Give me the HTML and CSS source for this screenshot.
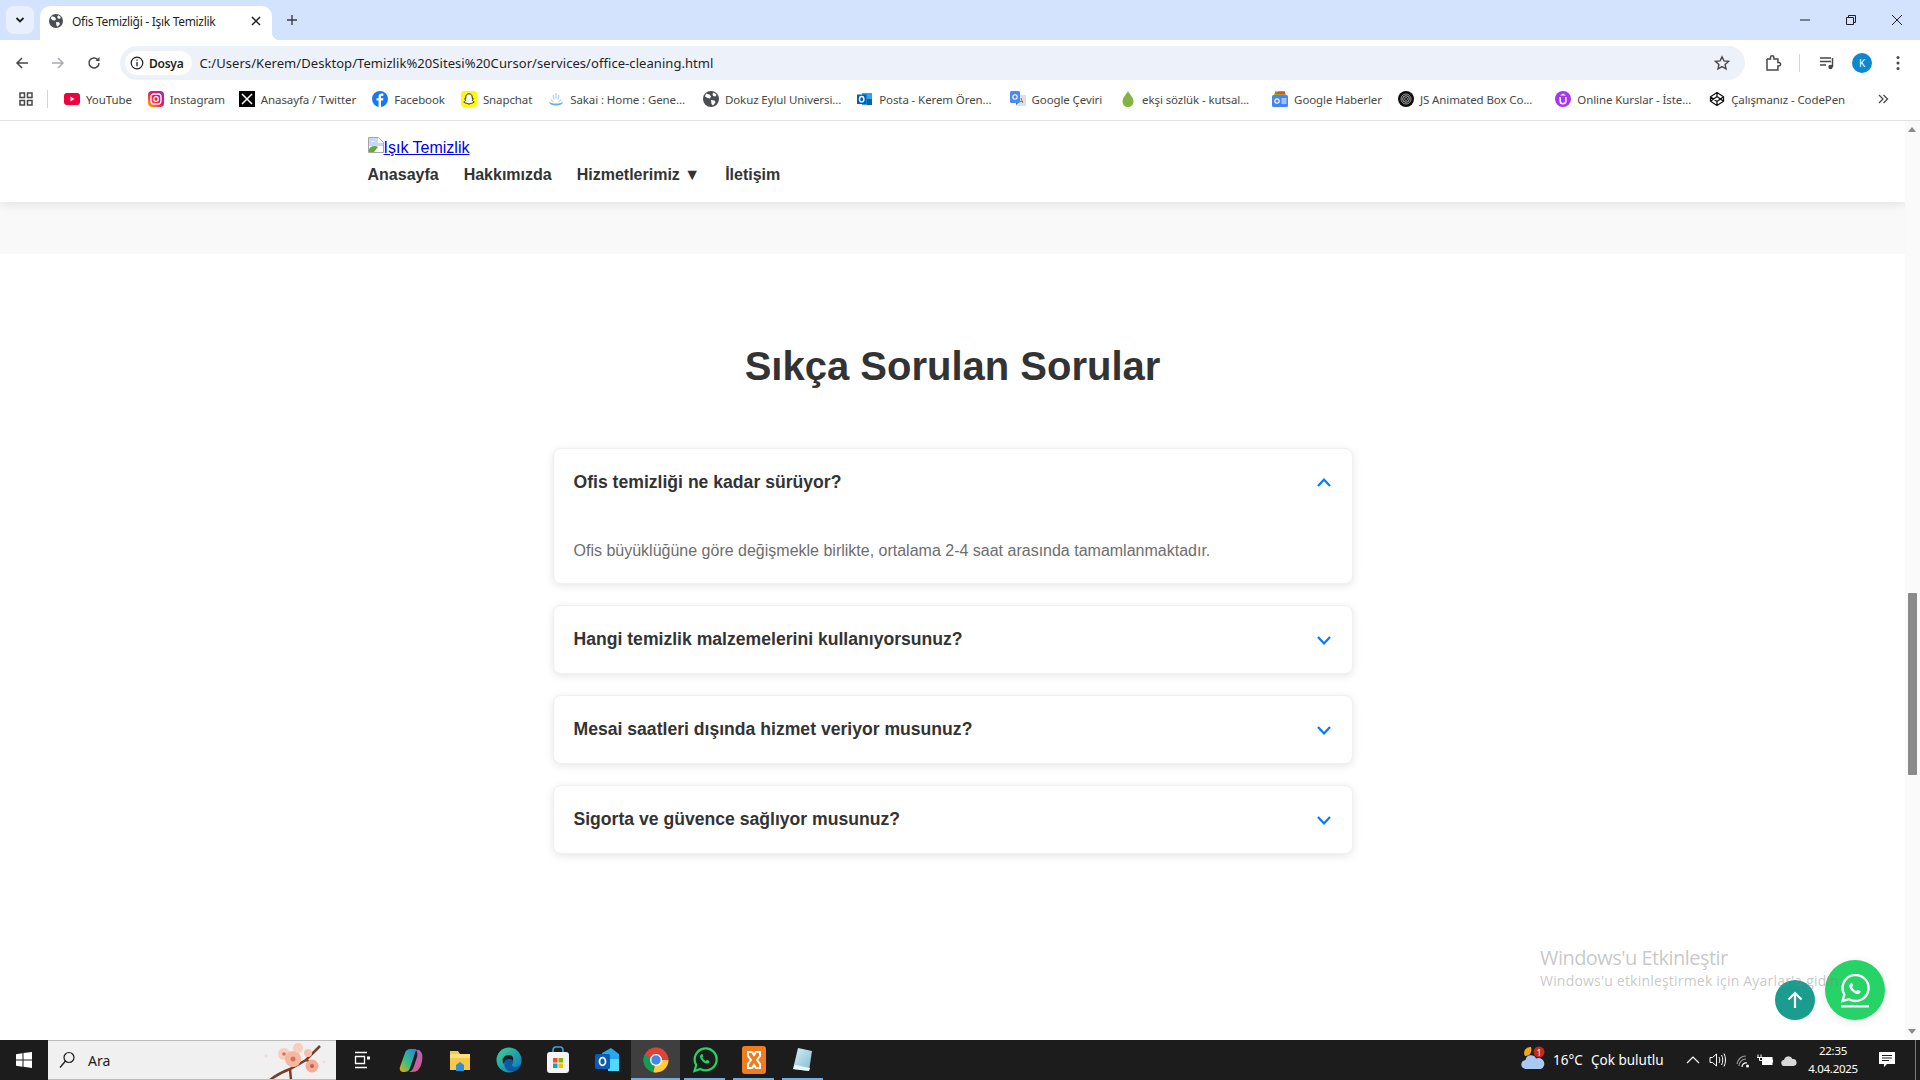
FILE: index.html
```html
<!DOCTYPE html>
<html lang="tr">

<head>
    <meta charset="UTF-8">
    <meta name="viewport" content="width=device-width, initial-scale=1.0">
    <title>Ofis Temizliği - Işık Temizlik</title>
    <link rel="stylesheet" href="styles.css">
</head>

<body>
    <svg class="defs" width="0" height="0">
        <symbol id="globe" viewBox="0 0 16 16">
            <circle cx="8" cy="8" r="8" fill="#4a4d51"/>
            <path d="M3 2.500l3.500 1 1.500 2-1 2-2.500-.5L2 5.500zM8 9l3.500.5 1 2-2.500 3-1.500-1.500zM10.500 1.500l3 2-1 2-2.500-.5-.5-2z" fill="#fff"/>
        </symbol>
        <symbol id="chev-down" viewBox="0 0 16 16">
            <path d="M2 5l6 6.500L14 5" fill="none" stroke="#007bff" stroke-width="2.200"/>
        </symbol>
        <symbol id="chev-up" viewBox="0 0 16 16">
            <path d="M2 11l6-6.500L14 11" fill="none" stroke="#007bff" stroke-width="2.200"/>
        </symbol>
    </svg>

    <!-- tarayici ust kismi -->
    <div class="tabstrip">
        <button class="tab-search">
            <svg width="10" height="10" viewBox="0 0 10 10"><path d="M1.500 3L5 6.500 8.500 3" fill="none" stroke="#1f1f1f" stroke-width="1.800"/></svg>
        </button>
        <div class="tab">
            <svg class="tab-icon" width="14" height="14"><use href="#globe"/></svg>
            <span class="tab-title">Ofis Temizliği - Işık Temizlik</span>
            <svg class="tab-close" width="10" height="10" viewBox="0 0 10 10"><path d="M1 1l8 8M9 1L1 9" stroke="#1f1f1f" stroke-width="1.500"/></svg>
        </div>
        <svg class="tab-new" width="12" height="12" viewBox="0 0 12 12"><path d="M6 1v10M1 6h10" stroke="#3c3c3c" stroke-width="1.400"/></svg>
        <div class="window-controls">
            <svg width="12" height="12" viewBox="0 0 12 12"><path d="M1 6h10" stroke="#1f1f1f"/></svg>
            <svg width="12" height="12" viewBox="0 0 12 12"><path d="M1.500 3.500h7v7h-7zM3.500 3.500v-2h7v7h-2" fill="none" stroke="#1f1f1f"/></svg>
            <svg width="12" height="12" viewBox="0 0 12 12"><path d="M1 1l10 10M11 1L1 11" stroke="#1f1f1f"/></svg>
        </div>
    </div>

    <div class="toolbar">
        <div class="nav-buttons">
            <svg width="14" height="14" viewBox="0 0 14 14"><path d="M13 7H2M7 2L2 7l5 5" fill="none" stroke="#474747" stroke-width="1.500"/></svg>
            <svg width="14" height="14" viewBox="0 0 14 14"><path d="M1 7h11M7 2l5 5-5 5" fill="none" stroke="#a9acb0" stroke-width="1.500"/></svg>
            <svg width="14" height="14" viewBox="0 0 14 14"><path d="M12 7a5 5 0 1 1-1.500-3.600" fill="none" stroke="#474747" stroke-width="1.500"/><path d="M12.500 1v4h-4z" fill="#474747"/></svg>
        </div>
        <div class="address-bar">
            <div class="chip">
                <svg width="14" height="14" viewBox="0 0 14 14"><circle cx="7" cy="7" r="5.800" fill="none" stroke="#1f1f1f" stroke-width="1.200"/><path d="M7 6v4.200M7 3.500v1.300" stroke="#1f1f1f" stroke-width="1.300"/></svg>
                <span>Dosya</span>
            </div>
            <span class="url">C:/Users/Kerem/Desktop/Temizlik%20Sitesi%20Cursor/services/office-cleaning.html</span>
            <svg class="star" width="16" height="16" viewBox="0 0 16 16"><path d="M8 1.800l1.900 4.100 4.500.5-3.300 3 .9 4.400L8 11.600l-4 2.200.9-4.400-3.300-3 4.500-.5z" fill="none" stroke="#474747" stroke-width="1.400"/></svg>
        </div>
        <div class="toolbar-right">
            <svg class="tool-ext" width="18" height="18" viewBox="0 0 18 18"><path d="M3 5h3.500V3.500a1.700 1.700 0 0 1 3.400 0V5h4v3.500h1a1.700 1.700 0 0 1 0 3.400h-1V16H3v-3" fill="none" stroke="#474747" stroke-width="1.500"/><path d="M3 5v8" stroke="#474747" stroke-width="1.500"/></svg>
            <span class="tool-divider"></span>
            <svg class="tool-media" width="16" height="16" viewBox="0 0 16 16"><path d="M1 3h11M1 6.500h11M1 10h6" stroke="#474747" stroke-width="1.300"/><path d="M13.500 3v9" stroke="#474747" stroke-width="1.500"/><circle cx="11.500" cy="12" r="2.200" fill="#474747"/></svg>
            <span class="avatar">K</span>
            <svg class="tool-dots" width="4" height="16" viewBox="0 0 4 16"><circle cx="2" cy="2.500" r="1.500" fill="#474747"/><circle cx="2" cy="8" r="1.500" fill="#474747"/><circle cx="2" cy="13.500" r="1.500" fill="#474747"/></svg>
        </div>
    </div>

    <div class="bookmarks">
        <svg class="apps" width="14" height="14" viewBox="0 0 14 14"><path d="M1 1h4.500v4.500H1zM8.500 1H13v4.500H8.500zM1 8.500h4.500V13H1zM8.500 8.500H13V13H8.500z" fill="none" stroke="#474747" stroke-width="1.500"/></svg>
        <span class="bm-divider"></span>
        <a class="bm">
            <svg width="16" height="16" viewBox="0 0 16 16"><rect y="2" width="16" height="12" rx="3" fill="#f0003c"/><path d="M6.500 5.500v5l4-2.500z" fill="#fff"/></svg>YouTube</a>
        <a class="bm bm-tight">
            <svg width="16" height="16" viewBox="0 0 16 16"><defs><linearGradient id="ig" x1="0" y1="1" x2="1" y2="0"><stop offset="0" stop-color="#fdb60d"/><stop offset=".5" stop-color="#f0145a"/><stop offset="1" stop-color="#a425d6"/></linearGradient></defs><rect width="16" height="16" rx="4" fill="url(#ig)"/><rect x="3" y="3" width="10" height="10" rx="3" fill="none" stroke="#fff" stroke-width="1.300"/><circle cx="8" cy="8" r="2.300" fill="none" stroke="#fff" stroke-width="1.300"/></svg>Instagram</a>
        <a class="bm">
            <svg width="16" height="16" viewBox="0 0 16 16"><rect width="16" height="16" fill="#000"/><path d="M3 3l10 10M13 3L3 13" stroke="#fff" stroke-width="1.500"/></svg>Anasayfa / Twitter</a>
        <a class="bm">
            <svg width="16" height="16" viewBox="0 0 16 16"><circle cx="8" cy="8" r="8" fill="#1877f2"/><path d="M9 16V9.500h2l.4-2.300H9V6c0-.8.300-1.200 1.200-1.200h1.200V2.700C11 2.600 10.400 2.500 9.800 2.500 7.800 2.500 6.600 3.700 6.600 5.700v1.500H4.500v2.300h2.100V16z" fill="#fff"/></svg>Facebook</a>
        <a class="bm">
            <svg width="16" height="16" viewBox="0 0 16 16"><rect width="16" height="16" rx="3" fill="#fffc00"/><path d="M8 2.800c2 0 3.200 1.400 3.200 3.200v1.500l1.300.3c-.2.800-1.100.9-1.300 1.300.3 1.200 1.200 1.700 2 1.900-.3.700-1.300.6-1.800 1-.5.500-1.500.1-3.400 1.200-1.900-1.100-2.900-.7-3.400-1.200-.5-.4-1.500-.3-1.800-1 .8-.2 1.700-.7 2-1.900-.2-.4-1.100-.5-1.300-1.300l1.300-.3V6c0-1.800 1.200-3.200 3.200-3.200z" fill="#fff" stroke="#111" stroke-width=".9"/></svg>Snapchat</a>
        <a class="bm bm-wide">
            <svg width="16" height="16" viewBox="0 0 16 16"><path d="M1 10.500c0 2.500 3 4 7 4s7-1.500 7-4c-1 1.500-3.500 2-7 2s-6-.5-7-2z" fill="#6aaee4"/><path d="M8 2v6M5.500 4c-.5 1.500-.5 3 .5 4.500M10.500 4c.5 1.500.5 3-.5 4.500M3 8.500c.5 1 1.500 1.800 2.500 2M13 8.500c-.5 1-1.500 1.800-2.500 2" fill="none" stroke="#a9cdeb" stroke-width="1.100"/></svg>Sakai : Home : Gene...</a>
        <a class="bm">
            <svg width="16" height="16"><use href="#globe"/></svg>Dokuz Eylul Universi...</a>
        <a class="bm bm-wide">
            <svg width="16" height="16" viewBox="0 0 16 16"><path d="M5 2h10v12H5z" fill="#28a8ea"/><path d="M10 8h5v6h-5z" fill="#0f5ea8"/><rect y="3.500" width="9.500" height="9.500" fill="#0a5bb5"/><ellipse cx="4.700" cy="8.200" rx="2.200" ry="2.700" fill="none" stroke="#fff" stroke-width="1.400"/></svg>Posta - Kerem Ören...</a>
        <a class="bm bm-wide">
            <svg width="16" height="16" viewBox="0 0 16 16"><rect x="6" y="4" width="10" height="11" fill="#dcdfe3"/><path d="M11 7l1.800 5M9.500 10.500h3.500" stroke="#7a7f85" stroke-width="1"/><rect width="10" height="12" rx="1.500" fill="#4a8af0"/><circle cx="5" cy="6" r="2.200" fill="none" stroke="#fff" stroke-width="1.100"/><path d="M6 14l2-2H6z" fill="#2f62b8"/></svg>Google Çeviri</a>
        <a class="bm bm-wider">
            <svg width="16" height="16" viewBox="0 0 16 16"><path d="M8 0c1 2.500 5.500 6.500 5.500 10.500a5.500 5.500 0 0 1-11 0C2.500 6.500 7 2.500 8 0z" fill="#81b441"/></svg>ekşi sözlük - kutsal...</a>
        <a class="bm">
            <svg width="16" height="16" viewBox="0 0 16 16"><path d="M2 2.500h12v3H2z" fill="#f9ab00"/><path d="M3 0.500h10v3H3z" fill="#34a853"/><path d="M6 .5h7v2H6z" fill="#ea4335"/><rect y="4" width="16" height="12" rx="1.500" fill="#4285f4"/><circle cx="5" cy="10" r="2.200" fill="none" stroke="#fff" stroke-width="1.200"/><path d="M9.500 8h5M9.500 10h5M9.500 12h5" stroke="#fff"/></svg>Google Haberler</a>
        <a class="bm bm-wider">
            <svg width="16" height="16" viewBox="0 0 16 16"><circle cx="8" cy="8" r="8" fill="#0c0c0c"/><circle cx="8" cy="8" r="5" fill="none" stroke="#bbb" stroke-width=".8"/><circle cx="8" cy="8" r="3.300" fill="none" stroke="#ddd" stroke-width=".8"/><circle cx="8" cy="8" r="1.500" fill="none" stroke="#999" stroke-width=".8"/></svg>JS Animated Box Co...</a>
        <a class="bm bm-wide">
            <svg width="16" height="16" viewBox="0 0 16 16"><circle cx="8" cy="8" r="8" fill="#a435f0"/><path d="M5.200 6v4a2.800 2.800 0 0 0 5.600 0V6" fill="none" stroke="#fff" stroke-width="1.600"/><path d="M8 2.500L5 4.500h6z" fill="#fff"/></svg>Online Kurslar - İste...</a>
        <a class="bm">
            <svg width="16" height="16" viewBox="0 0 16 16"><path d="M8 1.500l6.500 4.300v4.400L8 14.500l-6.500-4.300V5.800zM8 1.500v4M8 10.500v4M1.500 5.800L8 10.500l6.500-4.700M1.500 10.200L8 5.500l6.500 4.700" fill="none" stroke="#111" stroke-width="1.300"/></svg>Çalışmanız - CodePen</a>
        <svg class="bm-more" width="12" height="12" viewBox="0 0 12 12"><path d="M2 2l4 4-4 4M6.500 2l4 4-4 4" fill="none" stroke="#474747" stroke-width="1.300"/></svg>
    </div>

    <div class="viewport">
        <div class="page">
            <header class="site-header">
                <div class="container">
                    <a class="logo" href="#"><svg class="broken-img" width="16" height="16" viewBox="0 0 16 16"><path d="M.5.500h10l5 5v10H.5z" fill="#fff" stroke="#a5a5a5"/><path d="M1 1h9v5h5v3L1 9z" fill="#c5d8f5"/><path d="M3 5a2 1.200 0 0 1 4 0z" fill="#fff"/><path d="M1 15v-3c2-3 6-4 9-2l-4 5z" fill="#5fa83c"/></svg>Işık Temizlik</a>
                    <nav class="main-nav">
                        <a href="#">Anasayfa</a>
                        <a href="#">Hakkımızda</a>
                        <a href="#">Hizmetlerimiz ▼</a>
                        <a href="#">İletişim</a>
                    </nav>
                </div>
            </header>
            <div class="gray-strip"></div>
            <section class="faq">
                <h2>Sıkça Sorulan Sorular</h2>
                <div class="faq-list">
                    <div class="faq-item">
                        <div class="faq-question">
                            <h3>Ofis temizliği ne kadar sürüyor?</h3>
                            <svg width="16" height="16"><use href="#chev-up"/></svg>
                        </div>
                        <p class="faq-answer">Ofis büyüklüğüne göre değişmekle birlikte, ortalama 2-4 saat arasında tamamlanmaktadır.</p>
                    </div>
                    <div class="faq-item">
                        <div class="faq-question">
                            <h3>Hangi temizlik malzemelerini kullanıyorsunuz?</h3>
                            <svg width="16" height="16"><use href="#chev-down"/></svg>
                        </div>
                    </div>
                    <div class="faq-item">
                        <div class="faq-question">
                            <h3>Mesai saatleri dışında hizmet veriyor musunuz?</h3>
                            <svg width="16" height="16"><use href="#chev-down"/></svg>
                        </div>
                    </div>
                    <div class="faq-item">
                        <div class="faq-question">
                            <h3>Sigorta ve güvence sağlıyor musunuz?</h3>
                            <svg width="16" height="16"><use href="#chev-down"/></svg>
                        </div>
                    </div>
                </div>
            </section>

            <a class="fab fab-top" href="#">
                <svg width="16" height="18" viewBox="0 0 16 18"><path d="M8 17V2M1.500 8.500L8 2l6.500 6.500" fill="none" stroke="#fff" stroke-width="2.200"/></svg>
            </a>
            <a class="fab fab-whatsapp" href="#">
                <svg class="wa-icon" width="32" height="34" viewBox="0 0 32 34"><path d="M3.500 27l1.800-6.500A13 13 0 1 1 10 25.200z" fill="none" stroke="#fff" stroke-width="2.400"/><path d="M11.500 9.500c-2 1.500-1.500 4.500 1.500 7.500s6 4 7.800 2.300c.8-.8.800-1.800.5-2.200l-2.800-1.400-1.300 1.400c-1.800-.7-3.500-2.300-4.200-4.200l1.300-1.200-1.200-2.900c-.5-.3-1-.2-1.600.7z" fill="#fff"/><rect x="2" y="31" width="28" height="2.500" fill="#fff"/></svg>
            </a>
            <div class="watermark">
                <div class="wm-title">Windows'u Etkinleştir</div>
                <div class="wm-sub">Windows'u etkinleştirmek için Ayarlar'a gidin.</div>
            </div>
        </div>
        <div class="scrollbar">
            <span class="arrow-up"></span>
            <span class="thumb"></span>
            <span class="arrow-down"></span>
        </div>
    </div>

    <!-- gorev cubugu -->
    <div class="taskbar">
        <div class="start">
            <svg width="16" height="16" viewBox="0 0 16 16"><path d="M0 2.300l6.500-1V7.500H0zM7.500 1.100L16 0v7.500H7.500zM0 8.500h6.500v6.200l-6.500-1zM7.500 8.500H16V16l-8.500-1.200z" fill="#fff"/></svg>
        </div>
        <div class="search">
            <svg width="16" height="18" viewBox="0 0 16 18"><circle cx="10" cy="6.500" r="5" fill="none" stroke="#1c1c1c" stroke-width="1.200"/><path d="M6.500 10L1 16.500" stroke="#1c1c1c" stroke-width="1.300"/></svg>
            <span>Ara</span>
            <svg class="blossom" width="66" height="38" viewBox="0 0 66 38"><path d="M8 38c5-4 12-8 20-11l16-9 14-14M28 27l1 11M44 18l10 5" fill="none" stroke="#7a3d25" stroke-width="2.500"/><circle cx="4" cy="14" r="1.500" fill="#f8dcd2"/><circle cx="62" cy="20" r="1.500" fill="#f8dcd2"/><circle cx="22" cy="12" r="6" fill="#f8cdbd"/><circle cx="31" cy="17" r="8" fill="#f4b7a0"/><circle cx="50" cy="24" r="6.500" fill="#f2ab96"/><circle cx="36" cy="6" r="5" fill="#f8cdbd"/><circle cx="46" cy="11" r="4" fill="#f6c0ae"/><circle cx="31" cy="17" r="2.500" fill="#d9705a"/><circle cx="50" cy="24" r="2" fill="#c85e4c"/><circle cx="22" cy="12" r="1.800" fill="#d9705a"/></svg>
        </div>
        <div class="task-icons">
            <span class="task-slot task-view">
                <svg width="16" height="18" viewBox="0 0 16 18"><path d="M1 1.500h12M1 16.500h12M1.500 5.500h9v7h-9z" fill="none" stroke="#fff" stroke-width="1.300"/><rect x="13" y="5.500" width="3" height="3" fill="#fff"/></svg>
            </span>
            <span class="task-slot">
                <svg width="24" height="26" viewBox="0 0 24 26"><defs><linearGradient id="cp1" x1="0" y1="1" x2="1" y2="0"><stop offset="0" stop-color="#f5a800"/><stop offset=".45" stop-color="#2fbf8f"/><stop offset="1" stop-color="#2d7fe0"/></linearGradient><linearGradient id="cp2" x1="0" y1="0" x2="1" y2="1"><stop offset="0" stop-color="#8a6be8"/><stop offset="1" stop-color="#e8587a"/></linearGradient></defs><path d="M11 2h5c2 0 1 2 0 4l-5 15c-1 3-3 4-6 4-3 0-5-2-4-5L6 6c1-3 3-4 5-4z" fill="url(#cp1)"/><path d="M17 3c3-1 5 1 6 4 1 4 0 12-4 16-1 1-3 2-6 2h-3c3-1 4-3 5-6l3-9c1-3 0-5-1-7z" fill="url(#cp2)"/></svg>
            </span>
            <span class="task-slot">
                <svg width="24" height="24" viewBox="0 0 24 24"><path d="M2 3h8l2 3h10v16H2z" fill="#f7c948"/><path d="M2 6h20v4H2z" fill="#fcdf7e"/><path d="M8 23v-6l4-3 4 3v6z" fill="#2e8fd6"/></svg>
            </span>
            <span class="task-slot">
                <svg width="26" height="26" viewBox="0 0 26 26"><defs><linearGradient id="ed" x1="0" y1="0" x2="1" y2="1"><stop offset="0" stop-color="#3fd58f"/><stop offset="1" stop-color="#0c6fc0"/></linearGradient></defs><circle cx="13" cy="13" r="12.500" fill="url(#ed)"/><path d="M13 24c-5-2-6-8-3-11 2-2 6-1 7 1 1 2-1 3-1 4 0 3 6 3 9-1-1 5-6 9-12 7z" fill="#0b5aa6"/><path d="M17 14c-1-2-5-3-7-1-1 1-2 2-2 4-3-3-1-9 5-9 3 0 5 2 4 6z" fill="#1c1c1c"/></svg>
            </span>
            <span class="task-slot">
                <svg width="24" height="28" viewBox="0 0 24 28"><path d="M7 7V4a3 3 0 0 1 3-3h4a3 3 0 0 1 3 3v3" fill="none" stroke="#28a8ea" stroke-width="1.600"/><rect x="1" y="6" width="22" height="21" rx="3" fill="#f4f4f4"/><rect x="7" y="12" width="4.500" height="4.500" fill="#f25022"/><rect x="12.500" y="12" width="4.500" height="4.500" fill="#7fba00"/><rect x="7" y="17.500" width="4.500" height="4.500" fill="#00a4ef"/><rect x="12.500" y="17.500" width="4.500" height="4.500" fill="#ffb900"/></svg>
            </span>
            <span class="task-slot">
                <svg width="26" height="26" viewBox="0 0 26 26"><path d="M8 6l9-5 8 6v15H8z" fill="#28a8ea"/><path d="M14 12h11v12H14z" fill="#50d9ff"/><rect x="1" y="7" width="15" height="15" rx="1.500" fill="#0a5bb5"/><ellipse cx="8.500" cy="14.500" rx="3" ry="3.800" fill="none" stroke="#fff" stroke-width="1.800"/></svg>
            </span>
            <span class="task-slot is-active">
                <svg width="26" height="26" viewBox="0 0 26 26"><circle cx="13" cy="13" r="12.500" fill="#db4437"/><path d="M13 13L1.500 8a12.500 12.500 0 0 0 9 17.200z" fill="#0f9d58"/><path d="M13 13h12.500a12.500 12.500 0 0 1-15 12.200z" fill="#ffcd40"/><circle cx="13" cy="13" r="6" fill="#fff"/><circle cx="13" cy="13" r="4.700" fill="#4285f4"/></svg>
            </span>
            <span class="task-slot is-open">
                <svg width="26" height="26" viewBox="0 0 26 26"><path d="M2.500 24l1.700-6A11 11 0 1 1 8.300 22z" fill="#1c1c1c" stroke="#25d366" stroke-width="2.200"/><path d="M9 7.500c-1.700 1.300-1.300 3.800 1.300 6.400s5 3.400 6.500 2c.7-.7.700-1.500.4-1.900l-2.300-1.200-1.100 1.200c-1.500-.6-3-2-3.500-3.500l1.100-1-1-2.400c-.5-.3-.9-.2-1.400.4z" fill="#25d366"/></svg>
            </span>
            <span class="task-slot is-open">
                <svg width="24" height="28" viewBox="0 0 24 28"><rect width="24" height="28" rx="3" fill="#f07c20"/><path d="M6 6h4l2 3 2-3h4v4l-3 4 3 4v4h-4l-2-3-2 3H6v-4l3-4-3-4z" fill="none" stroke="#fff" stroke-width="2"/></svg>
            </span>
            <span class="task-slot is-open">
                <svg width="24" height="26" viewBox="0 0 24 26"><defs><linearGradient id="nt" x1="0" y1="0" x2="1" y2="1"><stop offset="0" stop-color="#d7f2f8"/><stop offset="1" stop-color="#7db9cf"/></linearGradient></defs><path d="M7 1l14 3-3 20L2 22z" fill="url(#nt)"/><path d="M2 22l16 2 1-3L4 18z" fill="#e9f7fa"/></svg>
            </span>
        </div>
        <div class="tray">
            <svg class="weather" width="24" height="24" viewBox="0 0 24 24"><path d="M10 1a6 6 0 0 0-6 9c3 0 5-1 6-4 .5-2 .5-4 0-5z" fill="#f3a51f"/><path d="M5 23a4.500 4.500 0 0 1-.5-9 5.500 5.500 0 0 1 10.500-1.500A5.200 5.200 0 0 1 20 23z" fill="#a9c9f0"/><circle cx="18" cy="6" r="5.500" fill="#c42b1c"/></svg>
            <span class="badge">1</span>
            <span class="temp">16°C</span>
            <span class="cond">Çok bulutlu</span>
            <svg class="tray-chev" width="14" height="8" viewBox="0 0 14 8"><path d="M1 7l6-6 6 6" fill="none" stroke="#fff" stroke-width="1.200"/></svg>
            <svg class="tray-sound" width="17" height="16" viewBox="0 0 17 16"><path d="M1 5.500h2.500L7.500 2v12l-4-3.500H1z" fill="none" stroke="#fff"/><path d="M10 5c1 2 1 4 0 6M12.500 3c1.700 3 1.700 7 0 10M15 1.500c2 4 2 9 0 13" fill="none" stroke="#fff"/></svg>
            <svg class="tray-wifi" width="14" height="14" viewBox="0 0 14 14"><path d="M1 10a9 9 0 0 1 9-8M3 12a7 7 0 0 1 7-7" fill="none" stroke="#9a9a9a" stroke-width="1.200"/><path d="M6 13a4 4 0 0 1 5-4" fill="none" stroke="#fff" stroke-width="1.200"/><circle cx="11.500" cy="12" r="1.500" fill="#fff"/></svg>
            <svg class="tray-batt" width="16" height="12" viewBox="0 0 16 12"><path d="M1 .5v3M4 .5v3M0 3.500h5M2.500 3.500v3h3" fill="none" stroke="#fff"/><rect x="5.500" y="3.500" width="9.500" height="7" fill="#fff" stroke="#fff"/><rect x="15" y="5.500" width="1" height="3" fill="#fff"/></svg>
            <svg class="tray-cloud" width="16" height="10" viewBox="0 0 16 10"><path d="M3.500 10a3 3 0 0 1-.5-6 4.500 4.500 0 0 1 8.500-1A3.500 3.500 0 0 1 12.500 10z" fill="#d8d8d8"/></svg>
            <div class="clock"><span>22:35</span><span>4.04.2025</span></div>
            <svg class="tray-notif" width="16" height="16" viewBox="0 0 16 16"><path d="M0 0h16v12H8l-3 3v-3H0z" fill="#fff"/><path d="M3 3.500h10M3 6h10M3 8.500h7" stroke="#1c1c1c"/></svg>
            <span class="show-desktop"></span>
        </div>
    </div>
</body>

</html>
```

FILE: styles.css
```css
* {
    box-sizing: border-box;
}

html, body {
    margin: 0;
    height: 100%;
    overflow: hidden;
}

body {
    display: flex;
    flex-direction: column;
    height: 1080px;
    font-family: "Liberation Sans", Arial, sans-serif;
    background-color: #fff;
    color: #333;
}

.defs {
    position: absolute;
}

/* tab strip */
.tabstrip {
    display: flex;
    align-items: flex-end;
    height: 40px;
    flex: none;
    padding-left: 6px;
    background-color: #d3e3fd;
}

.tab-search {
    display: flex;
    align-items: center;
    justify-content: center;
    width: 28px;
    height: 28px;
    margin-bottom: 6px;
    padding: 0;
    border: none;
    border-radius: 8px;
    background-color: #e9f0fc;
}

.tab {
    position: relative;
    display: flex;
    align-items: center;
    width: 232px;
    height: 34px;
    margin-left: 6px;
    padding: 0 11px 4px 9px;
    border-radius: 10px 10px 0 0;
    background-color: #fff;
}

.tab::after {
    content: "";
    position: absolute;
    right: -8px;
    bottom: 0;
    width: 8px;
    height: 8px;
    background: radial-gradient(circle at 100% 0, #d3e3fd 8px, #fff 8.5px);
}

.tab-icon {
    flex: none;
}

.tab-title {
    flex: 1;
    margin-left: 9px;
    font-family: "Noto Sans", sans-serif;
    font-size: 12px;
    letter-spacing: -0.3px;
    color: #1f1f1f;
    white-space: nowrap;
}

.tab-new {
    margin: 0 0 14px 14px;
}

.window-controls {
    display: flex;
    gap: 34px;
    margin-left: auto;
    margin-right: 17px;
    margin-bottom: 14px;
}

/* toolbar */
.toolbar {
    display: flex;
    align-items: center;
    height: 40px;
    flex: none;
    padding-top: 6px;
    border-radius: 10px 10px 0 0;
    background-color: #fff;
    margin-top: 0;
}

.nav-buttons {
    display: flex;
    gap: 22px;
    width: 120px;
    padding-left: 15px;
}

.address-bar {
    display: flex;
    align-items: center;
    width: 1625px;
    height: 34px;
    padding: 0 15px 0 5px;
    border-radius: 17px;
    background-color: #edf2fa;
}

.chip {
    display: flex;
    align-items: center;
    gap: 5px;
    height: 24px;
    padding: 0 9px 0 5px;
    border-radius: 12px;
    background-color: #fff;
    font-family: "Noto Sans", sans-serif;
    font-size: 12px;
    font-weight: 600;
    letter-spacing: -0.25px;
    color: #1f1f1f;
}

.url {
    margin-left: 7px;
    font-family: "Noto Sans", sans-serif;
    font-size: 13px;
    letter-spacing: 0.06px;
    color: #1f1f1f;
    white-space: nowrap;
}

.star {
    margin-left: auto;
}

.toolbar-right {
    display: flex;
    align-items: center;
    flex: 1;
}

.tool-ext {
    margin-left: 19px;
}

.tool-divider {
    width: 1px;
    height: 18px;
    margin-left: 17px;
    background-color: #c7d7ee;
}

.tool-media {
    margin-left: 19px;
}

.avatar {
    display: flex;
    align-items: center;
    justify-content: center;
    width: 20px;
    height: 20px;
    margin-left: 17px;
    border-radius: 50%;
    background-color: #0b88d0;
    color: #fff;
    font-family: "Noto Sans", sans-serif;
    font-size: 10px;
}

.tool-dots {
    margin-left: 24px;
}

/* bookmarks */
.bookmarks {
    display: flex;
    align-items: center;
    height: 41px;
    flex: none;
    padding: 0 0 2px 19px;
    border-bottom: 1px solid #e3e3e3;
    background-color: #fff;
    font-family: "Noto Sans", sans-serif;
    font-size: 11.5px;
    letter-spacing: -0.1px;
    color: #474747;
    white-space: nowrap;
}

.bm-divider {
    width: 1px;
    height: 18px;
    margin: 0 16px 0 14px;
    background-color: #c7d7ee;
}

.bm {
    display: flex;
    align-items: center;
    gap: 6px;
    margin-right: 16px;
}

.bm-tight {
    margin-right: 14px;
}

.bm-wide {
    margin-right: 18px;
}

.bm-wider {
    margin-right: 23px;
}

.bm-more {
    margin-left: auto;
    margin-right: 31px;
}

/* page area */
.viewport {
    display: flex;
    flex: 1;
    min-height: 0;
}

.page {
    position: relative;
    flex: 1;
    overflow: hidden;
    background-color: #fff;
}

.scrollbar {
    position: relative;
    width: 15px;
    flex: none;
    background-color: #fafafa;
}

.arrow-up,
.arrow-down {
    position: absolute;
    left: 3px;
    width: 0;
    height: 0;
    border-left: 4.5px solid transparent;
    border-right: 4.5px solid transparent;
}

.arrow-up {
    top: 6px;
    border-bottom: 5px solid #8a8a8a;
}

.arrow-down {
    bottom: 6px;
    border-top: 5px solid #8a8a8a;
}

.thumb {
    position: absolute;
    top: 472px;
    left: 3px;
    width: 9px;
    height: 182px;
    border-radius: 1px;
    background-color: #8a8a8a;
}

.site-header {
    position: relative;
    height: 81px;
    padding-top: 16px;
    background-color: #fff;
    box-shadow: 0 2px 10px rgba(0, 0, 0, 0.1);
}

.container {
    max-width: 1200px;
    margin: 0 auto;
    padding: 0 15px;
}

.logo {
    display: block;
    font-size: 16px;
    color: #0000ee;
    line-height: 18px;
}

.broken-img {
    vertical-align: baseline;
}

.main-nav {
    display: flex;
    gap: 25px;
    margin-top: 8px;
}

.main-nav a {
    font-size: 16px;
    font-weight: 700;
    line-height: 20px;
    color: #333;
    text-decoration: none;
}

.gray-strip {
    height: 52px;
    background-color: #f9f9f9;
}

.faq {
    padding-top: 85px;
}

.faq h2 {
    margin: 0 0 55px;
    font-size: 40px;
    line-height: 54px;
    text-align: center;
    color: #333;
}

.faq-list {
    display: flex;
    flex-direction: column;
    gap: 21px;
    width: 800px;
    margin: 0 auto;
}

.faq-item {
    border: 1px solid #f0f0f0;
    border-radius: 8px;
    background-color: #fff;
    box-shadow: 0 2px 8px rgba(0, 0, 0, 0.1);
}

.faq-question {
    display: flex;
    align-items: center;
    justify-content: space-between;
    height: 67px;
    padding: 0 19.5px 0 20px;
}

.faq-question h3 {
    margin: 0;
    font-size: 17.6px;
    font-weight: 700;
    color: #333;
}

.faq-answer {
    margin: 0;
    padding: 0 20px 17px;
    margin-top: 20px;
    font-size: 16px;
    line-height: 30px;
    color: #6e6e6e;
}

/* floating buttons */
.fab {
    position: absolute;
    display: flex;
    align-items: center;
    justify-content: center;
    border-radius: 50%;
}

.fab-top {
    left: 1775px;
    top: 859px;
    width: 40px;
    height: 40px;
    background-color: #1a9d8f;
}

.fab-whatsapp {
    left: 1825px;
    top: 839px;
    width: 60px;
    height: 60px;
    background-color: #25d366;
    box-shadow: 0 2px 10px rgba(0, 0, 0, 0.1);
}

.wa-icon {
    margin-top: 2px;
}

.watermark {
    position: absolute;
    left: 1540px;
    top: 823px;
    font-family: "Open Sans", sans-serif;
    color: rgba(130, 130, 130, 0.45);
    white-space: nowrap;
    pointer-events: none;
}

.wm-title {
    font-size: 20px;
    line-height: 27px;
    letter-spacing: -0.55px;
}

.wm-sub {
    font-size: 14px;
    line-height: 20px;
    letter-spacing: 0.2px;
}

/* taskbar */
.taskbar {
    display: flex;
    align-items: stretch;
    height: 40px;
    flex: none;
    background-color: #1c1c1c;
    color: #fff;
    font-family: "Noto Sans", sans-serif;
}

.start {
    display: flex;
    align-items: center;
    justify-content: center;
    width: 48px;
}

.search {
    position: relative;
    display: flex;
    align-items: center;
    width: 288px;
    padding-left: 11px;
    overflow: hidden;
    border-top: 1px solid #bdbdbd;
    border-bottom: 1px solid #bdbdbd;
    background-color: #f0f0f0;
    color: #1c1c1c;
    font-size: 14px;
}

.search span {
    margin-left: 13px;
}

.blossom {
    position: absolute;
    right: 8px;
    top: 1px;
}

.task-icons {
    display: flex;
    margin-left: 1px;
}

.task-slot {
    position: relative;
    display: flex;
    align-items: center;
    justify-content: center;
    width: 49px;
}

.task-slot.is-active {
    background-color: #3f3f3f;
}

.task-slot.is-active::after,
.task-slot.is-open::after {
    content: "";
    position: absolute;
    left: 4px;
    right: 4px;
    bottom: 0;
    height: 2px;
    background-color: #6cb0e8;
}

.task-slot.is-active::after {
    left: 0;
    right: 0;
}

.tray {
    position: relative;
    display: flex;
    align-items: center;
    flex: 1;
    margin-left: 23px;
    font-size: 13.5px;
}

.weather {
    position: absolute;
    left: 671px;
    top: 6px;
}

.badge {
    position: absolute;
    left: 683.500px;
    top: 7px;
    width: 11px;
    font-size: 8px;
    line-height: 11px;
    text-align: center;
}

.temp {
    position: absolute;
    left: 703px;
    top: 11px;
}

.cond {
    position: absolute;
    left: 741px;
    top: 11px;
}

.tray-chev {
    position: absolute;
    left: 836px;
    top: 16px;
}

.tray-sound {
    position: absolute;
    left: 859px;
    top: 12px;
}

.tray-wifi {
    position: absolute;
    left: 886px;
    top: 14px;
}

.tray-batt {
    position: absolute;
    left: 907px;
    top: 14px;
}

.tray-cloud {
    position: absolute;
    left: 931px;
    top: 16px;
}

.clock {
    position: absolute;
    left: 938px;
    top: 2px;
    display: flex;
    flex-direction: column;
    align-items: center;
    width: 90px;
    font-size: 11.5px;
    letter-spacing: -0.3px;
    line-height: 18px;
}

.tray-notif {
    position: absolute;
    left: 1029px;
    top: 12px;
}

.show-desktop {
    position: absolute;
    right: 4px;
    top: 0;
    bottom: 0;
    width: 1px;
    background-color: #7a7a7a;
}
```
